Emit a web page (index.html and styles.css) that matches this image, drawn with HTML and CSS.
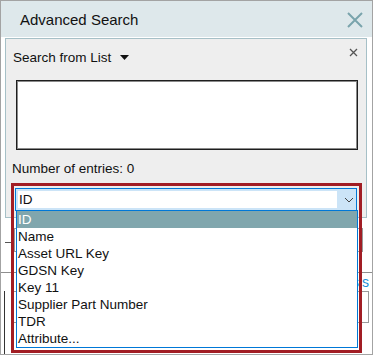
FILE: index.html
```html
<!DOCTYPE html>
<html>
<head>
<meta charset="utf-8">
<link rel="stylesheet" href="styles.css">
</head>
<body>
<div class="dialog">
  <div class="titlebar">
    <span class="title">Advanced Search</span>
    <svg class="close-big" width="16" height="16" viewBox="0 0 16 16"><path d="M1 1L15 15M15 1L1 15" stroke="#7aa4ac" stroke-width="2" fill="none"/></svg>
  </div>
  <div class="content">
    <div class="panel">
      <div class="panel-head">
        <span class="panel-title">Search from List <svg class="caret" width="9" height="5" viewBox="0 0 9 5"><path d="M0 0H9L4.5 5Z" fill="#111"/></svg></span>
        <svg class="close-small" width="9" height="9" viewBox="0 0 9 9"><path d="M1 1L8 8M8 1L1 8" stroke="#555" stroke-width="1.3" fill="none"/></svg>
      </div>
      <div class="textarea"></div>
      <div class="count">Number of entries: 0</div>
      <div class="combo">
        <div class="combo-field">ID</div>
        <svg class="chevron" width="10" height="6" viewBox="0 0 10 6"><path d="M1 1L5 5L9 1" stroke="#444" stroke-width="1" fill="none"/></svg>
      </div>
    </div>
    <div class="field-block">
      <span class="tick"></span>
      <div class="field"></div>
    </div>
    <div class="rule"></div>
    <div class="link-row"><span class="link">Analysis</span></div>
    <div class="list-block">
      <span class="vline"></span>
      <div class="box"><span class="dots">⋮</span></div>
    </div>
  </div>
  <div class="highlight"></div>
  <ul class="dropdown">
    <li class="selected">ID</li>
    <li>Name</li>
    <li>Asset URL Key</li>
    <li>GDSN Key</li>
    <li>Key 11</li>
    <li>Supplier Part Number</li>
    <li>TDR</li>
    <li>Attribute...</li>
  </ul>
</div>
</body>
</html>
```

FILE: styles.css
```css
* { box-sizing: border-box; }
html, body { margin: 0; padding: 0; background: #fff; }
body { font-family: "Liberation Sans", Arial, sans-serif; color: #111; }

.dialog {
  position: relative;
  width: 373px;
  height: 355px;
  border: 1px solid #a3a3a3;
  background: #fff;
  overflow: hidden;
}

.titlebar {
  height: 36px;
  background: #dee8eb;
  display: flex;
  align-items: center;
  justify-content: space-between;
  padding: 0 9px 0 19px;
}
.title { font-size: 15px; color: #111; }
.close-big { display: block; margin-top: 1px; }

.content { padding-top: 1px; }

.panel {
  margin-left: 4px;
  width: 362px;
  height: 180px;
  border: 1px solid #a6c0c7;
  background: #eeeeee;
}
.panel-head {
  height: 36px;
  display: flex;
  justify-content: space-between;
  padding: 0 8px 0 7px;
}
.panel-title {
  font-size: 13.5px;
  display: flex;
  align-items: center;
  gap: 9px;
}
.caret { display: block; margin-top: 1px; }
.close-small { display: block; margin-top: 9px; }

.textarea {
  margin: 5px 0 0 10px;
  width: 342px;
  height: 70px;
  background: #fff;
  border: 1px solid #1e1e1e;
  box-shadow: inset 0 0 0 1px #8a8a8a;
}
.count {
  font-size: 13.5px;
  line-height: 17px;
  margin: 10px 0 0 6px;
}
.combo {
  margin: 11px 0 0 9px;
  width: 342px;
  height: 23px;
  border: 1px solid #0078d7;
  background: #cce4f7;
  padding: 2px;
  display: flex;
  align-items: center;
}
.combo-field {
  width: 319px;
  height: 17px;
  background: #fff;
  font-size: 13.5px;
  line-height: 17px;
  padding-left: 1px;
}
.chevron { display: block; margin-left: 7px; }

.field-block {
  height: 54px;
  display: flex;
  align-items: flex-start;
  padding-top: 10px;
}
.tick {
  margin: 14px 0 0 4px;
  width: 8px;
  height: 0;
  border-top: 1px solid #555;
}
.field {
  margin-left: 1px;
  width: 349px;
  height: 24px;
  border: 1px solid #9a9a9a;
}
.rule { border-top: 1px solid #8e8e8e; }
.link-row {
  height: 18px;
  display: flex;
  justify-content: flex-end;
  align-items: center;
  padding-right: 3px;
}
.link { font-size: 14px; color: #1b8fd8; }
.list-block {
  display: flex;
  height: 70px;
}
.vline {
  margin-left: 3px;
  width: 1px;
  height: 70px;
  background: #333;
}
.box {
  margin-left: 7px;
  width: 357px;
  height: 32px;
  border: 1px solid #9a9a9a;
  display: flex;
  justify-content: flex-end;
  align-items: center;
  padding-right: 8px;
}
.dots { color: #aaa; font-size: 12px; }

.highlight {
  position: absolute;
  left: 10px;
  top: 182px;
  width: 351px;
  height: 170px;
  border: 3px solid #a11d24;
}
.dropdown {
  position: absolute;
  left: 15px;
  top: 209px;
  width: 342px;
  height: 138px;
  margin: 0;
  padding: 0;
  list-style: none;
  background: #fff;
  border: 1px solid #0078d7;
}
.dropdown li {
  height: 17px;
  font-size: 13.5px;
  line-height: 17px;
  padding-left: 1px;
  color: #111;
  white-space: nowrap;
}
.dropdown li.selected {
  background: #80a6ad;
  color: #fff;
}
```
